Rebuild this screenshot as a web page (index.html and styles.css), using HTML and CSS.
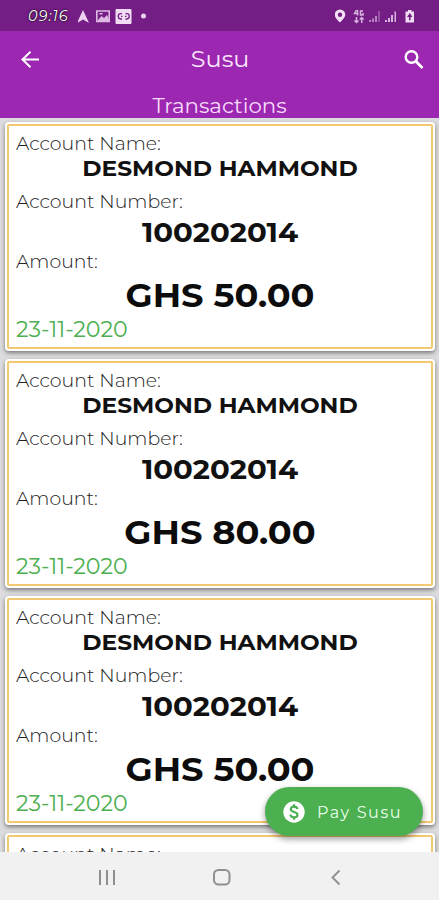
FILE: index.html
```html
<!DOCTYPE html>
<html lang="en">
<head>
  <meta charset="UTF-8" />
  <meta name="viewport" content="width=device-width, initial-scale=1.0" />
  <title>Susu</title>
  <link rel="stylesheet" href="styles.css">
</head>
<body>
  <div class="screen">
    <div class="status-bar">
      <span class="clock">09:16</span>
      <svg class="status-left" width="72" height="16" viewBox="0 0 72 16">
        <path fill="#ecd2f0" d="M5 2 L11 15 L5 11.500 L-1 15 Z" />
        <path fill="none" stroke="#ddb9e4" stroke-width="1.600" d="M18.800 3 H31.200 V13.500 H18.800 Z" />
        <path fill="#ddb9e4" d="M20 12 L23.500 8 L26 10 L29 7 L31 11 V13 H20 Z M21.500 5 h3 v1.500 h-3z" />
        <rect fill="#f0dcf3" x="37.500" y="1" width="16" height="15" rx="1" />
        <path fill="none" stroke="#76208a" stroke-width="1.300" d="M44 5.700 H42.500 Q40.300 5.700 40.300 8.300 T42.500 11 H44 M47.500 5.700 H49 Q51.200 5.700 51.200 8.300 T49 11 H47.500 M43 8.400 H44.500 M47 8.400 H48.500" />
        <circle fill="#ecd2f0" cx="65.500" cy="8" r="2.500" />
      </svg>
      <svg class="status-right" width="82" height="16" viewBox="0 0 82 16">
        <path fill="#f3e2f5" fill-rule="evenodd" d="M5 1.500 A5.300 5.300 0 0 0 -.3 6.800 C-.3 10 5 14.500 5 14.500 S10.300 10 10.300 6.800 A5.300 5.300 0 0 0 5 1.500 Z M5 4.600 A2.200 2.200 0 1 1 5 9 A2.200 2.200 0 0 1 5 4.600 Z" />
        <path fill="none" stroke="#d9b3e0" stroke-width="1.500" d="M21.500 2 L19.500 5.500 H23.500 M22.500 2 V7.500 M28 3 H25.500 V7 H28 V5 M21.500 9 V14.500 M19.500 12.500 L21.500 14.500 L23.500 12.500 M26.700 15 V9.500 M24.800 11.500 L26.700 9.500 L28.700 11.500" />
        <path fill="#b684c2" d="M34 12h2v2h-2z M37 10.500h2v3.500h-2z M40 8h2v6h-2z M43.500 3h1v11h-1z" />
        <path fill="#d9b3e0" d="M50 12h2v2h-2z M53 10h2v4h-2z M56 7h2v7h-2z M59.500 3.500h1.500v10.500h-1.500z" />
        <path fill="#f0dcf3" fill-rule="evenodd" d="M73 3.500 H70.500 V14.500 H79 V3.500 H76.500 V2 H73 Z M74.800 5 L72 9 H74 V12.300 H75.600 V9 H77.500 Z" />
      </svg>
    </div>

    <div class="app-bar">
      <svg width="20" height="18" viewBox="0 0 20 18">
        <path fill="none" stroke="#fff" stroke-width="2" d="M19 8.500 H2.500 M10.500 .8 L2.500 8.500 L10.500 16.200" />
      </svg>
      <h1 class="title">Susu</h1>
      <svg width="20" height="20" viewBox="0 0 20 20">
        <circle fill="none" stroke="#fff" stroke-width="2.400" cx="7.500" cy="7" r="5.800" />
        <path fill="none" stroke="#fff" stroke-width="2.700" d="M11.800 11.300 L18.500 18" />
      </svg>
    </div>
    <div class="tab">Transactions</div>

    <div class="list">
      <div class="card">
        <div class="label">Account Name:</div>
        <div class="name">DESMOND HAMMOND</div>
        <div class="label">Account Number:</div>
        <div class="number">100202014</div>
        <div class="label">Amount:</div>
        <div class="amount">GHS 50.00</div>
        <div class="date">23-11-2020</div>
      </div>
      <div class="card">
        <div class="label">Account Name:</div>
        <div class="name">DESMOND HAMMOND</div>
        <div class="label">Account Number:</div>
        <div class="number">100202014</div>
        <div class="label">Amount:</div>
        <div class="amount">GHS 80.00</div>
        <div class="date">23-11-2020</div>
      </div>
      <div class="card">
        <div class="label">Account Name:</div>
        <div class="name">DESMOND HAMMOND</div>
        <div class="label">Account Number:</div>
        <div class="number">100202014</div>
        <div class="label">Amount:</div>
        <div class="amount">GHS 50.00</div>
        <div class="date">23-11-2020</div>
      </div>
      <div class="card">
        <div class="label">Account Name:</div>
      </div>
    </div>

    <button class="pay-btn">
      <svg width="22" height="22" viewBox="0 0 22 22">
        <circle fill="#fff" cx="11" cy="11" r="10.700" />
        <path fill="none" stroke="#4caf50" stroke-width="2.100" d="M14.500 8 C14 6.200 12.700 5.600 11 5.600 C9 5.600 7.700 6.600 7.700 8.200 C7.700 11.800 14.500 10 14.500 13.700 C14.500 15.400 13 16.400 11 16.400 C9 16.400 7.600 15.500 7.300 13.700 M11 3.200 V5.600 M11 16.400 V18.800" />
      </svg>
      <span class="pay-text">Pay Susu</span>
    </button>

    <div class="nav-bar">
      <svg width="18" height="18" viewBox="0 0 18 18">
        <path fill="none" stroke="#8f8f8f" stroke-width="2" d="M2 2 V17 M9 2 V17 M16 2 V17" />
      </svg>
      <svg width="20" height="18" viewBox="0 0 20 18">
        <rect fill="none" stroke="#8f8f8f" stroke-width="2" x="1" y="2" width="15.500" height="14.500" rx="4.500" />
      </svg>
      <svg width="12" height="18" viewBox="0 0 12 18">
        <path fill="none" stroke="#8f8f8f" stroke-width="1.800" d="M9.500 2.500 L2.500 9.500 L9.500 16.500" />
      </svg>
    </div>
  </div>
</body>
</html>
```

FILE: styles.css
```css
* { box-sizing: border-box; }
body {
  margin: 0;
  font-family: 'Montserrat', 'Inter', sans-serif;
}
.screen {
  position: relative;
  display: flex;
  flex-direction: column;
  width: 439px;
  height: 900px;
  overflow: hidden;
  background: #dcdbdd;
}
.status-bar {
  flex: none;
  display: flex;
  align-items: center;
  height: 31px;
  padding: 0 22.5px 0 28px;
  background: #741d84;
}
.clock {
  width: 50px;
  padding-top: 2px;
  color: #fff;
  font-size: 14.5px;
  font-style: italic;
  letter-spacing: 1px;
  line-height: 31px;
  text-shadow: 0 0 2px #000, 0 0 1px #000;
}
.status-right { margin-left: auto; }
.app-bar {
  flex: none;
  display: flex;
  align-items: center;
  justify-content: space-between;
  height: 57px;
  padding: 0 15px 0 20px;
  background: #9c27b0;
}
.title {
  margin: 0 3px 2px 0;
  color: #fbe6ff;
  font-size: 23px;
  font-weight: 400;
  transform: scaleX(1.04);
}
.tab {
  flex: none;
  height: 30px;
  background: #9c27b0;
  color: #f8dcfc;
  font-size: 20px;
  line-height: 37px;
  text-align: center;
  transform: scaleX(1.065);
}
.list {
  flex: 1;
  display: flex;
  flex-direction: column;
  gap: 8px;
  min-height: 0;
  overflow: hidden;
  padding: 4px 4px 0 5px;
}
.card {
  flex: none;
  height: 229px;
  padding: 12px 11px;
  background: #fff;
  border-radius: 4px;
  box-shadow: 0 2px 4px rgba(0, 0, 0, .45);
  outline: 2px solid #f4c86f;
  outline-offset: -4px;
}
.label {
  color: #222;
  font-size: 18px;
  font-weight: 300;
  line-height: 20px;
  transform: scaleX(1.05);
  transform-origin: left;
}
.name {
  padding-top: 1px;
  margin-bottom: 9px;
  color: #111;
  font-size: 22px;
  font-weight: 700;
  line-height: 28px;
  text-align: center;
  transform: scaleX(1.06);
}
.number {
  margin-top: 1.5px;
  color: #111;
  font-size: 27px;
  font-weight: 700;
  line-height: 38px;
  text-align: center;
  transform: scaleX(1.08);
}
.amount {
  color: #0c0c0c;
  font-size: 32px;
  font-weight: 700;
  line-height: 47px;
  text-align: center;
  transform: scaleX(1.1);
}
.date {
  margin-top: -2px;
  color: #4caf50;
  font-size: 21.5px;
  line-height: 24px;
  transform: scaleX(1.03);
  transform-origin: left;
}
.pay-btn {
  position: absolute;
  right: 16px;
  bottom: 64px;
  display: flex;
  align-items: center;
  gap: 12px;
  width: 158px;
  height: 49px;
  padding: 0 0 0 18px;
  border: none;
  border-radius: 25px;
  background: #4caf50;
  box-shadow: 0 3px 6px rgba(0, 0, 0, .4);
  color: #e8ffe9;
  font-family: inherit;
  font-size: 16px;
}
.pay-text {
  padding-top: 1px;
  letter-spacing: 1.6px;
}
.nav-bar {
  flex: none;
  display: flex;
  align-items: center;
  justify-content: space-between;
  height: 48px;
  padding: 2px 97px 0 98px;
  background: #f1f1f1;
}
```
